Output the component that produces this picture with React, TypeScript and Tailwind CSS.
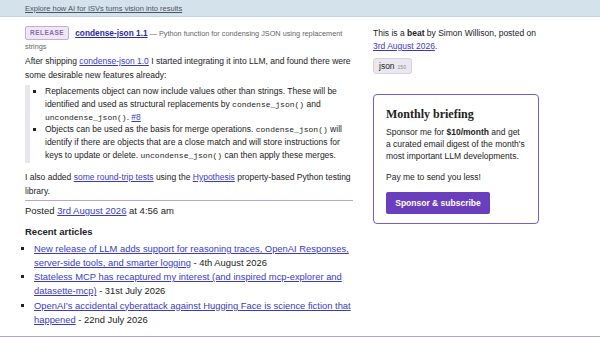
import React from "react";

const A = ({ children }: { children: React.ReactNode }) => (
  <a href="#" className="text-[#3a3ac4] underline decoration-[#3a3ac4]">{children}</a>
);

const C = ({ children }: { children: React.ReactNode }) => (
  <code className="font-['Liberation_Mono','DejaVu_Sans_Mono',monospace] text-[8px] leading-none">{children}</code>
);

export default function App() {
  return (
    <div className="w-[600px] h-[338px] overflow-hidden bg-white text-[#222] font-['Liberation_Sans',Arial,sans-serif] text-[8.5px] relative">
      <div className="h-[17px] bg-[#d4e2ec] border-b border-[#c2d2de] flex items-center px-[25px] pt-[2px]">
        <a href="#" className="text-[7.5px] leading-[10px] text-[#4a5563] underline">Explore how AI for ISVs turns vision into results</a>
      </div>
      <div className="flex gap-[18px] pl-[25px]">
        <div className="w-[330px] shrink-0">
          <div className="mt-[9px] leading-[12px]">
            <span className="inline-block text-[6.5px] font-bold tracking-[0.5px] text-[#8a6aa8] bg-[#efe8f4] border border-[#c4aed6] rounded-[2px] px-[4px] leading-[12px] mr-[6px] align-[1px]">RELEASE</span>
            <a href="#" className="font-bold text-[8.3px] text-[#2a2aa0] underline">condense-json 1.1</a>
            <span className="text-[7.3px] text-[#666]"> — Python function for condensing JSON using replacement strings</span>
          </div>
          <p className="mt-[1px] leading-[14px] w-[328px]">
            After shipping <A>condense-json 1.0</A> I started integrating it into LLM, and found there were some desirable new features already:
          </p>
          <div className="mt-[3px] w-[328px] border-l-[5px] border-[#e9e6ee] pl-[10px] pb-[1px]">
            <ul className="list-[square] pl-[5px] leading-[12.8px]">
              <li>Replacements object can now include values other than strings. These will be identified and used as structural replacements by <C>condense_json()</C> and <C>uncondense_json()</C>. <A>#8</A></li>
              <li>Objects can be used as the basis for merge operations. <C>condense_json()</C> will identify if there are objects that are a close match and will store instructions for keys to update or delete. <C>uncondense_json()</C> can then apply these merges.</li>
            </ul>
          </div>
          <p className="mt-[7px] leading-[14px] w-[328px]">
            I also added <A>some round-trip tests</A> using the <A>Hypothesis</A> property-based Python testing library.
          </p>
          <div className="mt-[2px] w-[328px] border-t border-[#b9a3cc]" />
          <p className="mt-[3px] leading-[14px] text-[9.5px]">Posted <A>3rd August 2026</A> at 4:56 am</p>
          <h3 className="mt-[7px] font-bold text-[9.5px] leading-[14px]">Recent articles</h3>
          <ul className="mt-[3px] w-[328px] list-[square] pl-[9px] leading-[14.2px] text-[9.4px]">
            <li><A>New release of LLM adds support for reasoning traces, OpenAI Responses, server-side tools, and smarter logging</A> - 4th August 2026</li>
            <li><A>Stateless MCP has recaptured my interest (and inspired mcp-explorer and datasette-mcp)</A> - 31st July 2026</li>
            <li><A>OpenAI’s accidental cyberattack against Hugging Face is science fiction that happened</A> - 22nd July 2026</li>
          </ul>
        </div>
        <div className="w-[168px]">
          <p className="mt-[10px] leading-[12.5px]">
            This is a <b>beat</b> by Simon Willison, posted on <A>3rd August 2026</A>.
          </p>
          <div className="mt-[6px] inline-flex items-baseline gap-[3px] bg-[#ebe7f0] border border-[#d8d2e0] rounded-[3px] px-[5px] h-[16px] leading-[14px]">
            <span className="text-[8.5px]">json</span>
            <span className="text-[5px] text-[#888]">150</span>
          </div>
          <div className="mt-[20px] w-[166px] border border-[#7a5cc2] rounded-[4px] px-[12px] pt-[11px] pb-[9px]">
            <h2 className="font-['Liberation_Serif','Times_New_Roman',serif] font-bold text-[12px] leading-[16px]">Monthly briefing</h2>
            <p className="mt-[4px] leading-[12px]">Sponsor me for <b>$10/month</b> and get a curated email digest of the month's most important LLM developments.</p>
            <p className="mt-[9px] leading-[12px]">Pay me to send you less!</p>
            <button className="mt-[9px] bg-[#6a3fbd] text-white font-bold text-[8.5px] rounded-[2px] w-[104px] h-[22px]">Sponsor &amp; subscribe</button>
          </div>
        </div>
      </div>
      <div className="absolute left-0 right-0 bottom-[1px] border-t border-[#b9a3cc]" />
    </div>
  );
}
